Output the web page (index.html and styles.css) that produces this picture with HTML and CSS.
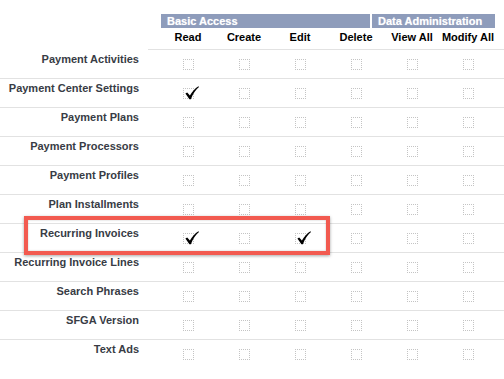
FILE: index.html
```html
<!DOCTYPE html>
<html lang="en">

<head>
    <meta charset="utf-8">
    <meta name="viewport" content="width=device-width, initial-scale=1.0">
    <title>Object Permissions</title>
    <link rel="stylesheet" href="styles.css">
</head>

<body>

    <div class="grupper">
        <div class="gruppe basis">Basic Access</div>
        <div class="gruppe admin">Data Administration</div>
    </div>

    <div class="kolonner">
        <div></div>
        <div>Read</div>
        <div>Create</div>
        <div>Edit</div>
        <div>Delete</div>
        <div>View All</div>
        <div>Modify All</div>
    </div>

    <div id="liste"></div>

    <script>
        // hver række: navn + hvilke bokse der er sat (read, create, edit, delete, view all, modify all)
        const rettigheder = [
            { navn: "Payment Activities", sat: [] },
            { navn: "Payment Center Settings", sat: [0] },
            { navn: "Payment Plans", sat: [] },
            { navn: "Payment Processors", sat: [] },
            { navn: "Payment Profiles", sat: [] },
            { navn: "Plan Installments", sat: [] },
            { navn: "Recurring Invoices", sat: [0, 2], markeret: true },
            { navn: "Recurring Invoice Lines", sat: [] },
            { navn: "Search Phrases", sat: [] },
            { navn: "SFGA Version", sat: [] },
            { navn: "Text Ads", sat: [] }
        ];

        const flueben = `<svg class="flueben" viewBox="0 0 14 14" width="14" height="14"><path d="M0.4 7.6 L2.2 6.4 L4.9 9.4 C7.2 5.4 10 2.4 13.4 0.2 L14 1.1 C10.8 3.8 8 7.8 5.9 13.3 L4.4 13.3 Z" fill="#000"/></svg>`;

        const dest = document.querySelector("#liste");
        rettigheder.forEach(r => {
            let celler = "";
            for (let i = 0; i < 6; i++) {
                celler += `<div class="celle"><span class="boks">${r.sat.includes(i) ? flueben : ""}</span></div>`;
            }
            dest.innerHTML += `
<div class="raekke">
<div class="navn">${r.navn}</div>
${celler}
${r.markeret ? '<div class="ramme"></div>' : ""}
</div>`;
        });
    </script>
</body>

</html>
```

FILE: styles.css
```css
body {
    margin: 0;
    padding-top: 14px;
    font-family: "Liberation Sans", Arial, sans-serif;
    font-size: 11px;
    font-weight: bold;
    background-color: #fff;
}

.grupper {
    display: flex;
    gap: 2px;
    margin-left: 161px;
}

.gruppe {
    height: 14px;
    line-height: 14px;
    padding-left: 6px;
    background-color: #8e9cbb;
    color: #fff;
    text-shadow: 0 0 1px rgba(255, 255, 255, 0.6);
    box-sizing: border-box;
}

.basis {
    width: 209px;
}

.admin {
    width: 123px;
}

.kolonner {
    display: grid;
    grid-template-columns: 160px repeat(6, 56px);
    height: 21px;
    padding-top: 2px;
    box-sizing: border-box;
    line-height: 14px;
    color: #000;
    text-align: center;
    position: relative;
}

/* linjen under kolonnenavnene starter først ved 148px */
.kolonner::after {
    content: "";
    position: absolute;
    left: 148px;
    right: 0;
    bottom: -1px;
    border-bottom: 1px solid #e2e2e2;
}

.raekke {
    display: grid;
    grid-template-columns: 160px repeat(6, 56px);
    height: 29px;
    border-bottom: 1px solid #e2e2e2;
    box-sizing: border-box;
    position: relative;
}

.raekke:first-child {
    height: 30px;
    padding-top: 1px;
}

.raekke:last-child {
    border-bottom: none;
}

.navn {
    text-align: right;
    padding: 2px 21px 0 0;
    line-height: 14px;
    color: #383c45;
    white-space: nowrap;
}

.celle {
    display: flex;
    align-items: center;
    justify-content: center;
}

.boks {
    width: 11px;
    height: 11px;
    border: 1px dotted #c4c4c4;
    box-sizing: border-box;
    position: relative;
}

.flueben {
    position: absolute;
    left: 1px;
    top: -3px;
    width: 14px;
    height: 14px;
}

.ramme {
    position: absolute;
    left: 24px;
    top: -8px;
    width: 306px;
    height: 39px;
    border: 4px solid #f25a50;
    box-sizing: border-box;
    box-shadow: 0 1px 3px rgba(0, 0, 0, 0.35), inset 0 0 2px rgba(0, 0, 0, 0.25);
    pointer-events: none;
}
```
